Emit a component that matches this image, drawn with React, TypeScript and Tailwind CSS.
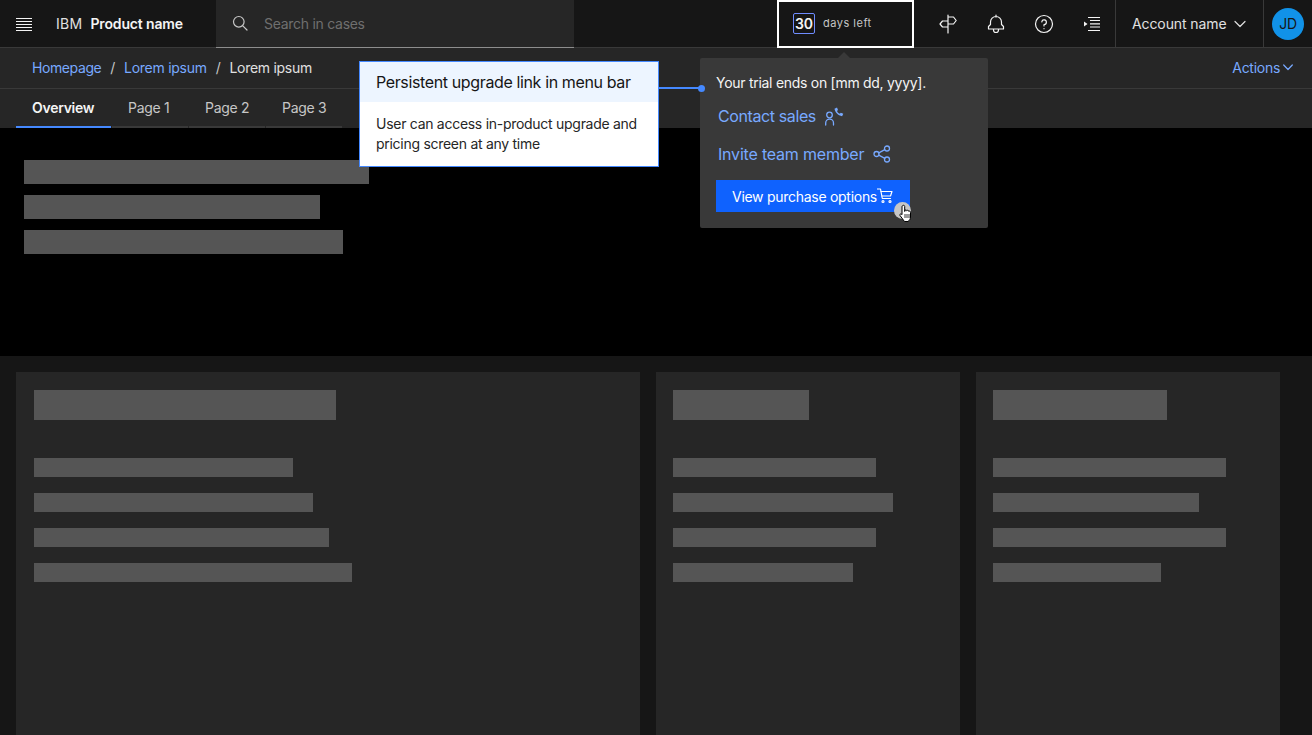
import React from "react";

const stroke = { fill: "none", stroke: "currentColor", strokeWidth: 1.2, strokeLinecap: "round" as const, strokeLinejoin: "round" as const };

function Bar({ w, h = "h-[19px]" }: { w: number; h?: string }) {
  return <div className={`${h} bg-[#555555]`} style={{ width: w }} />;
}

function Card({ width, pad, title, rows }: { width: number; pad: string; title: number; rows: number[] }) {
  return (
    <div className={`${pad} h-[400px] shrink-0 bg-[#262626] pt-[18px]`} style={{ width }}>
      <Bar w={title} h="h-[30px]" />
      <div className="mt-[38px] flex flex-col gap-4">
        {rows.map((r, i) => <Bar key={i} w={r} />)}
      </div>
    </div>
  );
}

function Tab({ label, active }: { label: string; active?: boolean }) {
  return (
    <div className={`mr-px flex h-[39px] shrink-0 items-center whitespace-nowrap border-b-2 pl-4 text-[14px] ${active ? "w-[95px] border-[#4589ff] font-semibold text-[#f4f4f4]" : "w-[76px] border-[#393939] text-[#c6c6c6]"}`}>
      {label}
    </div>
  );
}

function IconButton({ children }: { children: React.ReactNode }) {
  return <div className="flex h-[47px] w-[48px] shrink-0 items-center justify-center text-[#f4f4f4]">{children}</div>;
}

export default function App() {
  return (
    <div className="relative h-[735px] w-[1312px] overflow-hidden bg-[#161616] font-['Inter','Liberation_Sans',sans-serif] tracking-[-0.28px] text-[#f4f4f4]">
      <header className="flex h-[48px] items-center border-b border-[#393939] bg-[#161616]">
        <div className="flex h-[47px] w-[48px] shrink-0 items-center justify-center">
          <svg width="16" height="14" viewBox="0 0 16 14" className="text-[#f4f4f4]">
            <path d="M0 1.500h16M0 4.500h16M0 7.500h16M0 10.500h16M0 13.500h16" stroke="currentColor" strokeWidth="1" />
          </svg>
        </div>
        <div className="ml-2 flex w-[160px] shrink-0 items-center text-[14px] leading-none">
          <span className="tracking-[0.3px] text-[#e0e0e0]">IBM</span>
          <span className="ml-2 font-semibold tracking-[-0.15px] text-[#f4f4f4]">Product name</span>
        </div>
        <div className="flex h-[48px] w-[358px] shrink-0 items-center gap-4 border-b border-[#8d8d8d] bg-[#262626] pl-4">
          <svg width="16" height="16" viewBox="0 0 16 16" className="text-[#c6c6c6]" {...stroke}>
            <circle cx="6.800" cy="6.800" r="5.300" />
            <path d="M10.800 10.800 15 15" />
          </svg>
          <span className="text-[14px] text-[#6f6f6f]">Search in cases</span>
        </div>
        <div className="ml-[203px] flex h-[48px] w-[137px] shrink-0 items-center border-2 border-white bg-[#161616] pl-[14px]">
          <span className="flex h-[21px] w-[22px] items-center justify-center rounded-[2px] border border-[#6f8cff] text-[14px] font-semibold tracking-normal text-[#f4f4f4]">30</span>
          <span className="ml-2 text-[11px] tracking-[0.5px] text-[#c6c6c6]">days left</span>
        </div>
        <div className="ml-[10px] flex shrink-0">
          <IconButton>
            <svg width="20" height="20" viewBox="0 0 20 20" {...stroke}>
              <path d="M10 1v18M10 3h5.500l2.700 3.500-2.700 3.500H10M10 7H4.500L2 10l2.500 3H10" />
            </svg>
          </IconButton>
          <IconButton>
            <svg width="20" height="20" viewBox="0 0 20 20" {...stroke}>
              <path d="M10 1v2M2.500 15v-2.500l2-2V8a5.500 5.500 0 0 1 11 0v2.500l2 2V15ZM7.500 15v1a2.500 2.500 0 0 0 5 0v-1" />
            </svg>
          </IconButton>
          <IconButton>
            <svg width="20" height="20" viewBox="0 0 20 20" {...stroke}>
              <circle cx="10" cy="10" r="8.500" />
              <path d="M7.800 7.800A2.300 2.300 0 1 1 10 10.500v1.500M10 14.500v.2" />
            </svg>
          </IconButton>
          <IconButton>
            <svg width="20" height="20" viewBox="0 0 20 20">
              <path d="M6 3.500h12M8 6.500h10M8 9.800h10M8 13h10M6 16.500h12" stroke="currentColor" strokeWidth="1.200" />
              <path d="M2 7.500v5l3.500-2.500Z" fill="currentColor" />
            </svg>
          </IconButton>
        </div>
        <div className="-ml-px flex h-[47px] w-[149px] shrink-0 items-center border-x border-[#393939] pl-4 text-[14px] tracking-[-0.1px] text-[#e0e0e0]">
          <span>Account name</span>
          <svg width="12" height="8" viewBox="0 0 12 8" className="ml-auto mr-[17px]" {...stroke}>
            <path d="M1 1.500 6 6.500 11 1.500" />
          </svg>
        </div>
        <div className="ml-2 flex h-8 w-8 shrink-0 items-center justify-center rounded-full bg-[#1192e8] text-[14px] text-[#161616]">JD</div>
      </header>

      <div className="flex h-[41px] items-center border-b border-[#393939] bg-[#262626] pb-px pl-8 pr-[19px] text-[14px]">
        <span className="tracking-[-0.4px] text-[#78a9ff]">Homepage</span>
        <span className="mx-[9px] text-[#c6c6c6]">/</span>
        <span className="text-[#78a9ff]">Lorem ipsum</span>
        <span className="mx-[9px] text-[#c6c6c6]">/</span>
        <span className="text-[#e0e0e0]">Lorem ipsum</span>
        <span className="ml-auto text-[#78a9ff]">Actions</span>
        <svg width="10" height="7" viewBox="0 0 10 7" className="ml-[3px] text-[#78a9ff]" {...stroke}>
          <path d="M.7 1 5 5.500 9.300 1" />
        </svg>
      </div>

      <nav className="flex h-[39px] bg-[#262626] pl-4">
        <Tab label="Overview" active />
        <Tab label="Page 1" />
        <Tab label="Page 2" />
        <Tab label="Page 3" />
      </nav>

      <section className="flex h-[228px] flex-col gap-[11px] bg-black pl-6 pt-8">
        <Bar w={345} h="h-6" />
        <Bar w={296} h="h-6" />
        <Bar w={319} h="h-6" />
      </section>

      <main className="flex gap-4 bg-[#161616] pl-4 pt-4">
        <Card width={624} pad="pl-[18px]" title={302} rows={[259, 279, 295, 318]} />
        <Card width={304} pad="pl-[17px]" title={136} rows={[203, 220, 203, 180]} />
        <Card width={304} pad="pl-[17px]" title={174} rows={[233, 206, 233, 168]} />
      </main>

      {/* callout */}
      <div className="absolute left-[359px] top-[61px] w-[300px] border border-[#4589ff] bg-white">
        <div className="flex h-[40px] items-center bg-[#edf5ff] pl-4 text-[16px] tracking-[-0.37px] text-[#161616]">Persistent upgrade link in menu bar</div>
        <div className="h-[64px] px-4 pt-3 text-[14px] leading-[20px] text-[#262626]">
          User can access in-product upgrade and pricing screen at any time
        </div>
      </div>
      <div className="absolute left-[659px] top-[87px] h-[2px] w-[41px] bg-[#4589ff]" />

      {/* popover */}
      <div className="absolute left-[838px] top-[52px] h-0 w-0 border-x-[6px] border-b-[6px] border-x-transparent border-b-[#393939]" />
      <div className="absolute left-[700px] top-[58px] h-[170px] w-[288px] rounded-[2px] bg-[#393939] pl-4 pt-[15px]">
        <div className="text-[14px] leading-[20px] text-[#f4f4f4]">Your trial ends on [mm dd, yyyy].</div>
        <div className="ml-[2px] mt-[11px] flex h-6 items-center gap-[9px] text-[16px] tracking-[-0.39px] text-[#78a9ff]">
          <span>Contact sales</span>
          <svg width="20" height="20" viewBox="0 0 20 20" {...stroke} strokeWidth="1.300">
            <circle cx="4.500" cy="9" r="2.800" />
            <path d="M.7 19v-2a3.900 3.900 0 0 1 7.800 0v2" />
            <path d="M9.500 2.800 12 1.500l1 2.500-1 1c.6 1.300 1.500 2.200 2.800 2.800l1-1 2.500 1-1.200 2.500C13 9.500 10 6.500 9.500 2.800Z" fill="currentColor" stroke="none" />
          </svg>
        </div>
        <div className="ml-[2px] mt-[14px] flex h-6 items-center gap-[9px] text-[16px] tracking-[-0.2px] text-[#78a9ff]">
          <span>Invite team member</span>
          <svg width="18" height="18" viewBox="0 0 18 18" {...stroke} strokeWidth="1.300">
            <circle cx="3.500" cy="9" r="2.500" />
            <circle cx="14" cy="3.500" r="2.500" />
            <circle cx="14" cy="14.500" r="2.500" />
            <path d="M5.800 7.800 11.800 4.700M5.800 10.200 11.800 13.300" />
          </svg>
        </div>
        <div className="mt-[14px] flex h-8 w-[194px] items-center bg-[#0f62fe] pl-4 text-[14px] text-white">
          <span>View purchase options</span>
          <svg width="16" height="16" viewBox="0 0 16 16" className="shrink-0" {...stroke}>
            <path d="M0.500 1h3l1.800 9.500h8.200" />
            <path d="M4 3.500h11l-1.500 4.500H5" />
            <circle cx="6" cy="13.500" r="1" />
            <circle cx="13" cy="13.500" r="1" />
          </svg>
        </div>
      </div>
      <div className="absolute left-[698px] top-[85px] h-[7px] w-[7px] rounded-full bg-[#4589ff]" />

      {/* pointer */}
      <div className="absolute left-[894px] top-[202px] h-[17px] w-[17px] rounded-full bg-[#c6c6c6]" />
      <svg className="absolute left-[898px] top-[204px]" width="16" height="19" viewBox="0 0 16 19">
        <path d="M5 1.500c.8-.6 1.700 0 1.700 1v5l.5-1.500c.9-.4 1.500 0 1.500.8l.7-.5c.8-.2 1.300.3 1.300 1l.7-.2c.8 0 1.100.6 1.100 1.300v4.600c0 1.800-1 3.500-2.500 4.500H6.500L2 11.500c-.5-1 .3-1.900 1.300-1.400l.7.600V2.500c0-.4.400-.8 1-1Z" fill="#fff" stroke="#000" strokeWidth="1" />
        <path d="M7 10v4M9 10v4M11 10v4" stroke="#000" strokeWidth="0.800" />
      </svg>
    </div>
  );
}
